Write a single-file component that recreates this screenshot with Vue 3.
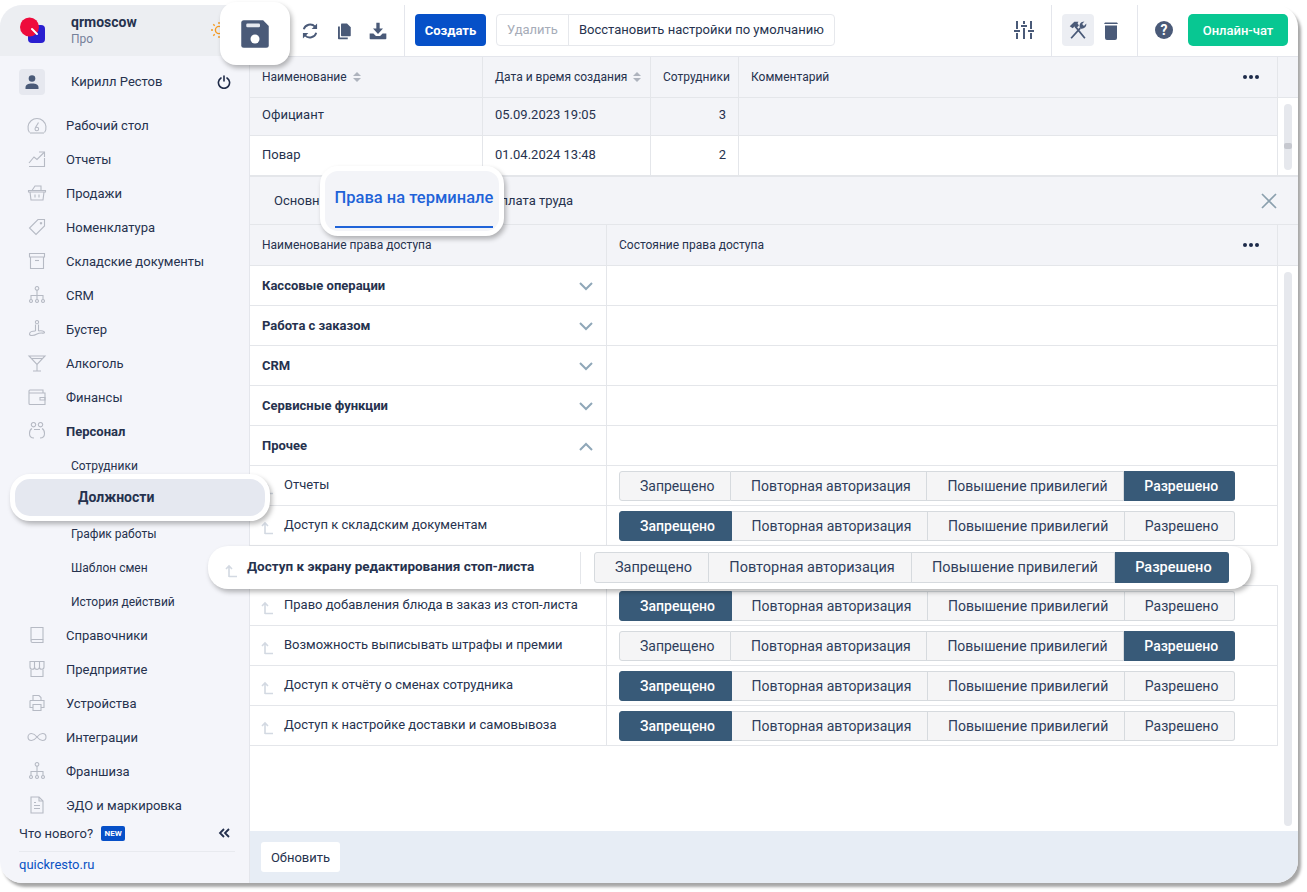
<template>
  <div class="page">
    <div class="app">
      <aside class="sidebar">
        <div class="side-head">
          <svg class="logo" width="28" height="28" viewBox="0 0 28 28">
            <rect x="9" y="8" width="17" height="18" rx="4" fill="#2a1fd0" />
            <circle cx="10.500" cy="10" r="9.500" fill="#ee0b3c" />
            <path d="M13 12l5 5" stroke="#fff" stroke-width="2" stroke-linecap="round" />
          </svg>
          <div class="org">
            <div class="org-name">qrmoscow</div>
            <div class="org-plan">Про</div>
          </div>
          <svg class="sun" width="18" height="18" viewBox="0 0 18 18" fill="none" stroke="#f59b23" stroke-width="1.400">
            <circle cx="9" cy="9" r="3.600" />
            <path d="M9 1v2M9 15v2M1 9h2M15 9h2M3.300 3.300l1.400 1.400M13.300 13.300l1.400 1.400M3.300 14.700l1.400-1.400M13.300 4.700l1.400-1.400" />
          </svg>
        </div>

        <div class="user">
          <div class="avatar">
            <svg width="16" height="16" viewBox="0 0 16 16" fill="#4a5a78">
              <circle cx="8" cy="4.500" r="3.300" />
              <path d="M1.500 15v-1.600C1.500 11 4 9.600 8 9.600s6.500 1.400 6.500 3.800V15z" />
            </svg>
          </div>
          <span class="user-name">Кирилл Рестов</span>
          <svg class="power" width="14" height="14" viewBox="0 0 14 14" fill="none" stroke="#1f2b48" stroke-width="1.600" stroke-linecap="round">
            <path d="M4 3a5.600 5.600 0 1 0 6 0M7 1v5" />
          </svg>
        </div>

        <nav class="nav">
          <template v-for="item in nav" :key="item.label">
            <div v-if="item.sub" class="nav-sub">
              <div v-if="item.current" class="nav-current">{{ item.label }}</div>
              <template v-else>{{ item.label }}</template>
            </div>
            <div v-else class="nav-item" :class="{ open: item.open }">
              <svg width="20" height="20" viewBox="0 0 20 20" fill="none" stroke="#b6bac4" stroke-width="1.100">
                <path v-for="d in icons[item.icon]" :key="d" :d="d" />
              </svg>
              <span>{{ item.label }}</span>
            </div>
          </template>
        </nav>

        <div class="side-foot">
          <div class="news">
            <span>Что нового?</span>
            <span class="badge">NEW</span>
            <svg class="collapse" width="12" height="12" viewBox="0 0 12 12" fill="none" stroke="#24304e" stroke-width="1.800">
              <path d="M6 2L2 6l4 4M11 2L7 6l4 4" />
            </svg>
          </div>
          <div class="site">quickresto.ru</div>
        </div>
      </aside>

      <main class="main">
        <header class="topbar">
          <div class="save-pop">
            <svg width="30" height="30" viewBox="0 0 24 24">
              <path fill="#4a5a78" d="M3 1h15.500L23 5.500V21a2 2 0 0 1-2 2H3a2 2 0 0 1-2-2V3a2 2 0 0 1 2-2z" />
              <rect x="5" y="3.600" width="11" height="3" rx="1" fill="#e6e9f0" />
              <circle cx="12" cy="16" r="3.600" fill="#fff" />
            </svg>
          </div>
          <div class="tool-group first">
            <svg class="tool" width="20" height="20" viewBox="0 0 24 24" fill="none" stroke="#4a5a78" stroke-width="2.200">
              <path d="M4.500 10A8 8 0 0 1 18 6.800M19.500 14A8 8 0 0 1 6 17.200" />
              <path fill="#4a5a78" stroke="none" d="M20.500 3v6.500H14zM3.500 21v-6.500H10z" />
            </svg>
            <svg class="tool" width="18" height="18" viewBox="0 0 24 24" fill="#4a5a78">
              <path d="M9 2h7l5 5v11a1 1 0 0 1-1 1H9a1 1 0 0 1-1-1V3a1 1 0 0 1 1-1z" />
              <path d="M4 6h2.500v14.500H17V23H5a1 1 0 0 1-1-1z" />
            </svg>
            <svg class="tool" width="20" height="20" viewBox="0 0 24 24" fill="#4a5a78">
              <path d="M10 2h4v7h4l-6 6.500L6 9h4z" />
              <path d="M2 15h4.500l3 3h5l3-3H22v6a1 1 0 0 1-1 1H3a1 1 0 0 1-1-1z" />
            </svg>
          </div>
          <div class="actions">
            <button class="btn-create">Создать</button>
            <div class="btn-group">
              <span class="muted">Удалить</span>
              <span>Восстановить настройки по умолчанию</span>
            </div>
          </div>
          <div class="spacer"></div>
          <svg class="sliders" width="20" height="20" viewBox="0 0 20 20" stroke="#4a5a78" stroke-width="2" fill="none">
            <path d="M3 1v8M3 13v6M0 11h6M10 1v3M10 8v11M7 6h6M17 1v8M17 13v6M14 11h6" />
          </svg>
          <div class="tool-group bordered">
            <div class="tool-active">
              <svg width="22" height="22" viewBox="0 0 24 24" fill="none" stroke="#4a5a78">
                <path stroke-width="1.900" d="M4.500 21L14.500 10M19.500 21L9 8" />
                <path fill="#4a5a78" stroke="none" d="M3 8l5-5h4.500l-1 1.500 1.500 2.500-3 3.200-1.800-2-2 1.800zM14 9c-1-3 1-6.200 5-6.200l-2.500 2.700 2 2L21 5c.6 4-3 6.200-6 5.500z" />
              </svg>
            </div>
            <svg class="trash" width="18" height="20" viewBox="0 0 18 20" fill="#4a5a78">
              <path d="M3 1.500h12l1 1.500H2zM3 4.500h12V17a2 2 0 0 1-2 2H5a2 2 0 0 1-2-2z" />
            </svg>
          </div>
          <div class="help">?</div>
          <button class="btn-chat">Онлайн-чат</button>
        </header>

        <section class="upper">
          <div class="upper-table">
            <div class="up-row head">
              <div class="cell"><span>Наименование</span>
                <svg class="sort" width="10" height="12" viewBox="0 0 10 12" fill="#aeb3bd"><path d="M5 1l4 4H1zM5 11L1 7h8z" /></svg>
              </div>
              <div class="cell"><span>Дата и время создания</span>
                <svg class="sort" width="10" height="12" viewBox="0 0 10 12" fill="#aeb3bd"><path d="M5 1l4 4H1zM5 11L1 7h8z" /></svg>
              </div>
              <div class="cell">Сотрудники</div>
              <div class="cell wide">Комментарий
                <span class="dots"><i></i><i></i><i></i></span>
              </div>
            </div>
            <div v-for="p in positions" :key="p.name" class="up-row" :class="{ selected: p.selected }">
              <div class="cell">{{ p.name }}</div>
              <div class="cell">{{ p.date }}</div>
              <div class="cell num">{{ p.count }}</div>
              <div class="cell"></div>
            </div>
          </div>
          <div class="side-scroll">
            <div class="scroll-head"></div>
            <div class="track short"><div class="thumb"></div></div>
          </div>
        </section>

        <section class="details">
          <div class="tabs">
            <span class="tab">Основные</span>
            <span class="tab tab-main">
              <span class="tab-pop"><span class="tab-pop-text">Права на терминале</span></span>
            </span>
            <span class="tab">Оплата труда</span>
            <svg class="close" width="16" height="16" viewBox="0 0 16 16" stroke="#8ba0ae" stroke-width="1.700" fill="none">
              <path d="M1 1l14 14M15 1L1 15" />
            </svg>
          </div>

          <div class="rights-wrap">
            <div class="rights">
              <div class="r-row r-head">
                <div class="r-name">Наименование права доступа</div>
                <div class="r-state">Состояние права доступа
                  <span class="dots"><i></i><i></i><i></i></span>
                </div>
              </div>

              <div v-for="g in groups" :key="g.name" class="r-row group">
                <div class="r-name">
                  {{ g.name }}
                  <svg class="chev" width="14" height="9" viewBox="0 0 14 9" fill="none" stroke="#8fa7b8" stroke-width="2">
                    <path :d="g.open ? 'M1 8l6-6 6 6' : 'M1 1l6 6 6-6'" />
                  </svg>
                </div>
                <div class="r-state"></div>
              </div>

              <div v-for="r in rights" :key="r.name" class="r-row">
                <div v-if="r.lifted" class="lifted">
                  <svg class="child-ico" width="12" height="14" viewBox="0 0 12 14" fill="none" stroke="#d3d9e2" stroke-width="1.600">
                    <path d="M4 13V2M1 5l3-3 3 3M4 12.500h8" />
                  </svg>
                  <b class="lifted-name">{{ r.name }}</b>
                  <div class="lifted-line"></div>
                  <div class="seg big">
                    <span v-for="(s, i) in states" :key="s" :class="{ on: r.active === i }">{{ s }}</span>
                  </div>
                </div>
                <template v-else>
                  <div class="r-name child">
                    <svg class="child-ico" width="12" height="14" viewBox="0 0 12 14" fill="none" stroke="#d3d9e2" stroke-width="1.600">
                      <path d="M4 13V2M1 5l3-3 3 3M4 12.500h8" />
                    </svg>
                    <span>{{ r.name }}</span>
                  </div>
                  <div class="r-state">
                    <div class="seg">
                      <span v-for="(s, i) in states" :key="s" :class="{ on: r.active === i }">{{ s }}</span>
                    </div>
                  </div>
                </template>
              </div>
            </div>
            <div class="side-scroll">
              <div class="scroll-head"></div>
              <div class="track long"></div>
            </div>
          </div>

          <div class="foot">
            <button class="btn-refresh">Обновить</button>
          </div>
        </section>
      </main>
    </div>
  </div>
</template>

<script setup>
const icons = {
  gauge: ['M2.500 17.500A9 9 0 1 1 17.500 17.500', 'M3 18h14', 'M8.500 12.500l3-5', 'M8 14a1.800 1.800 0 1 0 3.600 0a1.800 1.800 0 1 0-3.600 0'],
  chart: ['M2 14l5-6 3 2.500 7-7', 'M12 3h5.500v5', 'M2 17.500h15.500V9'],
  basket: ['M1.500 7.500h17v1.500h-17z', 'M3 9l1 8h12l1-8', 'M5 7.500L8 3h6v4.500', 'M8 11.500v3M12 11.500v3'],
  tag: ['M11 2.500h6.500V9L9 17.500 2.500 11z', 'M14 5.500a.7.7 0 1 0 .01 0'],
  box: ['M2.500 2.500h15v3.500h-15z', 'M3.500 6v11.500h13V6', 'M8 9.500h4'],
  org: ['M10 1.500a1.800 1.800 0 1 0 .01 0', 'M10 5v9M4 14v-3.500h12V14', 'M4 14.500a1.500 1.500 0 1 0 .01 0M10 14.500a1.500 1.500 0 1 0 .01 0M16 14.500a1.500 1.500 0 1 0 .01 0'],
  buster: ['M10 1.500a1.600 1.600 0 1 0 .01 0', 'M8.500 5.500v6.500M11.500 5.500v6.500', 'M8.500 12C5 12 2.500 13 2.500 15s4 2 7.500 0 7.500 0 7.500-1.500-3-2-6-1.500'],
  glass: ['M2 3h16L10 11.500z', 'M4.500 5.500h11', 'M10 11.500V18M6 18h8'],
  wallet: ['M16 6V3H3a1 1 0 0 0-1 1v12.500a1 1 0 0 0 1 1h15V6H2.500', 'M13 10.500h5v2.500h-5z'],
  people: ['M6.500 1.500a2.200 2.200 0 1 0 .01 0M13.500 1.500a2.200 2.200 0 1 0 .01 0', 'M5 7.500C3 8.500 2.500 10 2.500 12.500c0 3 2 4.500 4.500 4.500M15 7.500c2 1 2.500 2.500 2.500 5 0 3-2 4.500-4.500 4.500M7 8.500h6'],
  book: ['M4 2.500h12v12H5.500A1.500 1.500 0 0 0 4 16z', 'M4 16a1.500 1.500 0 0 0 1.500 1.500H16v-3'],
  shop: ['M3 2.500h14v5.500a2.300 2.300 0 0 1-4.600 0 2.400 2.400 0 0 1-4.800 0A2.300 2.300 0 0 1 3 8z', 'M7.500 2.500V8M12.500 2.500V8', 'M4 11v6.500h12V11'],
  printer: ['M6 7V2.500h6l2 2V7', 'M3 7.500h14v7h-3M6 14.500H3v-7', 'M6 11.500h8v6H6z'],
  infinity: ['M10 10C8 7.500 6.500 6.500 4.500 6.500a3.500 3.500 0 0 0 0 7c2 0 3.500-1 5.500-3.500s3.500-3.500 5.500-3.500a3.500 3.500 0 0 1 0 7c-2 0-3.500-1-5.500-3.500z'],
  doc: ['M4 2h8l4 4v12H4z', 'M12 2v4h4', 'M7 7.500h2M7 10.500h6M7 13.500h6']
}

const nav = [
  { label: 'Рабочий стол', icon: 'gauge' },
  { label: 'Отчеты', icon: 'chart' },
  { label: 'Продажи', icon: 'basket' },
  { label: 'Номенклатура', icon: 'tag' },
  { label: 'Складские документы', icon: 'box' },
  { label: 'CRM', icon: 'org' },
  { label: 'Бустер', icon: 'buster' },
  { label: 'Алкоголь', icon: 'glass' },
  { label: 'Финансы', icon: 'wallet' },
  { label: 'Персонал', icon: 'people', open: true },
  { label: 'Сотрудники', sub: true },
  { label: 'Должности', sub: true, current: true },
  { label: 'График работы', sub: true },
  { label: 'Шаблон смен', sub: true },
  { label: 'История действий', sub: true },
  { label: 'Справочники', icon: 'book' },
  { label: 'Предприятие', icon: 'shop' },
  { label: 'Устройства', icon: 'printer' },
  { label: 'Интеграции', icon: 'infinity' },
  { label: 'Франшиза', icon: 'org' },
  { label: 'ЭДО и маркировка', icon: 'doc' }
]

const positions = [
  { name: 'Официант', date: '05.09.2023 19:05', count: 3, selected: true },
  { name: 'Повар', date: '01.04.2024 13:48', count: 2 }
]

const groups = [
  { name: 'Кассовые операции' },
  { name: 'Работа с заказом' },
  { name: 'CRM' },
  { name: 'Сервисные функции' },
  { name: 'Прочее', open: true }
]

const states = ['Запрещено', 'Повторная авторизация', 'Повышение привилегий', 'Разрешено']

const rights = [
  { name: 'Отчеты', active: 3 },
  { name: 'Доступ к складским документам', active: 0 },
  { name: 'Доступ к экрану редактирования стоп-листа', active: 3, lifted: true },
  { name: 'Право добавления блюда в заказ из стоп-листа', active: 0 },
  { name: 'Возможность выписывать штрафы и премии', active: 3 },
  { name: 'Доступ к отчёту о сменах сотрудника', active: 0 },
  { name: 'Доступ к настройке доставки и самовывоза', active: 0 }
]
</script>

<style>
html,
body {
  margin: 0;
  background: #fff;
}
</style>

<style scoped>
.page {
  height: 892px;
  box-sizing: border-box;
  padding-top: 5px;
  overflow: hidden;
}

.app {
  display: flex;
  width: 1298px;
  height: 878px;
  border-radius: 22px;
  box-shadow: 3px 4px 3px rgba(0, 0, 0, 0.35);
  font-family: Roboto, "Noto Sans", sans-serif;
  font-size: 13px;
  color: #26324e;
  background: #fff;
}

button {
  font-family: inherit;
  cursor: pointer;
  border: 0;
}

.sidebar {
  width: 249px;
  flex-shrink: 0;
  display: flex;
  flex-direction: column;
  background: #f4f5fa;
  border-right: 1px solid #e4e6ec;
  border-radius: 22px 0 0 22px;
}

.side-head {
  height: 51px;
  display: flex;
  align-items: center;
  padding-left: 19px;
  background: #eceef2;
  border-radius: 22px 0 0 0;
  position: relative;
}

.logo {
  position: absolute;
  left: 19px;
  top: 12px;
}

.org {
  margin-left: 52px;
}

.org-name {
  font-size: 14px;
  font-weight: 700;
  line-height: 16px;
  padding-bottom: 1px;
  margin-top: -1px;
}

.org-plan {
  font-size: 12px;
  line-height: 16px;
  color: #76819a;
}

.sun {
  position: absolute;
  left: 210px;
  top: 16px;
}

.user {
  height: 52px;
  display: flex;
  align-items: center;
  padding-left: 19px;
  position: relative;
}

.avatar {
  width: 26px;
  height: 26px;
  border-radius: 4px;
  background: #e6e8ef;
  display: flex;
  align-items: center;
  justify-content: center;
}

.user-name {
  margin-left: 26px;
  margin-bottom: 2px;
}

.power {
  position: absolute;
  left: 217px;
  top: 19px;
}

.nav-item,
.nav-sub {
  height: 34px;
  display: flex;
  align-items: center;
  box-sizing: border-box;
}

.nav-item {
  padding-left: 27px;
  gap: 19px;
}

.nav-item.open {
  font-weight: 700;
}

.nav-sub {
  padding: 2px 0 0 71px;
  font-size: 12px;
  position: relative;
}

.nav-current {
  position: absolute;
  z-index: 5;
  left: 10px;
  top: -8px;
  width: 260px;
  height: 47px;
  box-sizing: border-box;
  display: flex;
  align-items: center;
  padding: 0 0 2px 63px;
  background: #e5e8f0;
  border: 5px solid #fff;
  border-radius: 20px;
  box-shadow: 2px 3px 5px rgba(0, 0, 0, 0.28);
  font-size: 14px;
  font-weight: 700;
}

.side-foot {
  margin: 0 14px 0 19px;
}

.news {
  height: 22px;
  display: flex;
  align-items: center;
  gap: 8px;
  position: relative;
}

.badge {
  width: 24px;
  height: 15px;
  background: #0650c8;
  border-radius: 2px;
  color: #fff;
  font-size: 8px;
  font-weight: 700;
  text-align: center;
  line-height: 15px;
}

.collapse {
  position: absolute;
  left: 199px;
  top: 5px;
}

.site {
  margin-top: 7px;
  padding-top: 5px;
  border-top: 1px solid #e8eaef;
  color: #0a52c4;
  line-height: 16px;
}

.main {
  flex: 1;
  min-width: 0;
  display: flex;
  flex-direction: column;
}

.topbar {
  height: 52px;
  flex-shrink: 0;
  box-sizing: border-box;
  display: flex;
  align-items: stretch;
  padding-bottom: 1px;
  border-bottom: 1px solid #e4e6ec;
  border-radius: 0 22px 0 0;
  position: relative;
}

.save-pop {
  position: absolute;
  z-index: 5;
  left: -30px;
  top: -3px;
  width: 70px;
  height: 63px;
  background: #fff;
  border-radius: 16px;
  box-shadow: 2px 3px 5px rgba(0, 0, 0, 0.28);
  display: flex;
  align-items: center;
  justify-content: center;
}

.tool-group {
  display: flex;
  align-items: center;
}

.tool-group.first {
  width: 155px;
  box-sizing: border-box;
  border-right: 1px solid #e4e6ec;
  padding-left: 50px;
  gap: 15px;
  margin-bottom: -1px;
}

.actions {
  display: flex;
  align-items: center;
  gap: 10px;
  padding-left: 10px;
}

.btn-create {
  width: 71px;
  height: 32px;
  background: #0650c8;
  color: #fff;
  border-radius: 4px;
  font-size: 13px;
  font-weight: 700;
}

.btn-group {
  display: flex;
  height: 32px;
  box-sizing: border-box;
  border: 1px solid #e6e8ec;
  border-radius: 4px;
  line-height: 30px;
}

.btn-group span {
  padding: 0 10px;
}

.btn-group .muted {
  color: #a6acb8;
  border-right: 1px solid #e6e8ec;
}

.spacer {
  flex: 1;
}

.sliders {
  align-self: center;
  margin-right: 17px;
}

.tool-group.bordered {
  width: 87px;
  box-sizing: border-box;
  border-left: 1px solid #e4e6ec;
  border-right: 1px solid #e4e6ec;
  padding-left: 10px;
  margin-bottom: -1px;
}

.tool-active {
  width: 32px;
  height: 32px;
  margin-bottom: 1px;
  background: #eceef3;
  border-radius: 4px;
  display: flex;
  align-items: center;
  justify-content: center;
}

.trash {
  margin-left: 8px;
}

.help {
  align-self: center;
  width: 18px;
  height: 18px;
  margin-left: 17px;
  border-radius: 50%;
  background: #4a5a78;
  color: #fff;
  font-size: 14px;
  font-weight: 700;
  line-height: 18px;
  text-align: center;
}

.btn-chat {
  align-self: center;
  width: 100px;
  height: 32px;
  margin-left: 15px;
  margin-right: 10px;
  background: #08c792;
  color: #fff;
  border-radius: 5px;
  font-size: 13px;
  font-weight: 500;
}

.upper {
  display: flex;
  height: 120px;
  flex-shrink: 0;
  box-sizing: border-box;
  border-bottom: 2px solid #e4e6ea;
}

.upper-table {
  width: 1028px;
}

.up-row {
  display: grid;
  grid-template-columns: 233px 168px 88px 539px;
  height: 39px;
  box-sizing: border-box;
  background: #fff;
}

.up-row.head {
  height: 41px;
  background: #f3f4f8;
  border-bottom: 1px solid #e4e6ea;
  font-size: 12px;
}

.up-row.selected {
  height: 38px;
  background: #f3f4f8;
  border-bottom: 1px solid #e4e6ea;
}

.up-row.selected .cell {
  padding-bottom: 4px;
}

.cell {
  display: flex;
  align-items: center;
  box-sizing: border-box;
  padding: 0 12px;
  border-right: 1px solid #e4e6ea;
  white-space: nowrap;
  position: relative;
}

.up-row:not(.head):not(.selected) .cell {
  padding-bottom: 2px;
}

.cell.num {
  justify-content: flex-end;
}

.sort {
  margin-left: 5px;
  flex-shrink: 0;
}

.dots {
  position: absolute;
  right: 18px;
  top: 50%;
  margin-top: -2px;
  display: flex;
  gap: 2px;
}

.dots i {
  width: 4px;
  height: 4px;
  border-radius: 50%;
  background: #1d2a4a;
}

.side-scroll {
  width: 20px;
  display: flex;
  flex-direction: column;
}

.scroll-head {
  height: 41px;
  flex-shrink: 0;
  background: #f3f4f8;
  border-bottom: 1px solid #e4e6ea;
  box-sizing: border-box;
}

.track {
  width: 8px;
  margin-left: 6px;
  border-radius: 4px;
  background: #e6e8ed;
}

.track.short {
  height: 66px;
  margin-top: 6px;
  padding-top: 39px;
  box-sizing: border-box;
}

.thumb {
  height: 6px;
  background: #c6c8cf;
  border-radius: 2px;
}

.track.long {
  height: 554px;
  margin-top: 6px;
}

.details {
  flex: 1;
  min-height: 0;
  display: flex;
  flex-direction: column;
}

.tabs {
  height: 48px;
  flex-shrink: 0;
  box-sizing: border-box;
  display: flex;
  align-items: center;
  padding: 0 21px 0 24px;
  background: #f3f4f8;
  border-bottom: 1px solid #e4e6ea;
}

.tab {
  white-space: nowrap;
}

.tab-main {
  width: 155px;
  position: relative;
  height: 100%;
}

.tab-pop {
  position: absolute;
  z-index: 5;
  left: -17px;
  top: -11px;
  width: 184px;
  height: 70px;
  box-sizing: border-box;
  padding: 0 6px 0 10px;
  background: #f3f4f8;
  border: 5px solid #fff;
  border-radius: 18px;
  box-shadow: 2px 3px 5px rgba(0, 0, 0, 0.28);
}

.tab-pop-text {
  display: block;
  height: 57px;
  line-height: 54px;
  box-sizing: border-box;
  border-bottom: 2px solid #1f63d8;
  color: #1f63d8;
  font-size: 16.500px;
  font-weight: 500;
  white-space: nowrap;
}

.close {
  margin-left: auto;
}

.rights-wrap {
  flex: 1;
  min-height: 0;
  display: flex;
}

.rights {
  width: 1028px;
  font-size: 13px;
}

.r-row {
  display: grid;
  grid-template-columns: 357px 671px;
  height: 40px;
  box-sizing: border-box;
  border-bottom: 1px solid #e4e6ea;
  position: relative;
}

.r-head {
  height: 41px;
  background: #f3f4f8;
  font-size: 12px;
}

.r-name {
  display: flex;
  align-items: center;
  padding: 0 12px;
  box-sizing: border-box;
  border-right: 1px solid #e4e6ea;
  position: relative;
}

.group .r-name {
  font-weight: 700;
}

.chev {
  position: absolute;
  left: 329px;
  top: 16px;
}

.child {
  padding-bottom: 3px;
}

.child-ico {
  margin-right: 11px;
  margin-top: 7px;
  margin-left: -1px;
  flex-shrink: 0;
}

.r-state {
  display: flex;
  align-items: center;
  padding-left: 12px;
  border-right: 1px solid #e4e6ea;
  position: relative;
}

.seg {
  display: flex;
  height: 30px;
  box-sizing: border-box;
  font-size: 14px;
  color: #2f3e5c;
}

.seg span {
  box-sizing: border-box;
  padding: 0 15.600px 0 20px;
  line-height: 28px;
  background: #f5f5f6;
  border: 1px solid #d6dade;
  border-left-width: 0;
  white-space: nowrap;
}

.seg span:first-child {
  border-left-width: 1px;
  border-radius: 3px 0 0 3px;
}

.seg span:last-child {
  border-radius: 0 3px 3px 0;
}

.seg span.on {
  background: #385a78;
  border-color: #385a78;
  color: #fff;
  font-weight: 500;
}

.lifted {
  position: absolute;
  z-index: 5;
  left: -42px;
  top: 0;
  width: 1043px;
  height: 43px;
  box-sizing: border-box;
  display: flex;
  align-items: center;
  padding-left: 18px;
  background: #fff;
  border-radius: 20px;
  box-shadow: 2px 3px 5px rgba(0, 0, 0, 0.28);
}

.lifted .child-ico {
  margin-right: 10px;
}

.lifted-name {
  font-size: 13.500px;
  font-weight: 700;
  width: 333px;
  flex-shrink: 0;
  padding-bottom: 3px;
  white-space: nowrap;
}

.lifted-line {
  width: 1px;
  height: 32px;
  background: #e4e6ea;
  margin-right: 13px;
}

.seg.big {
  height: 31px;
  font-size: 14.500px;
}

.seg.big span {
  padding: 0 16.200px 0 20px;
  line-height: 29px;
}

.foot {
  height: 52px;
  flex-shrink: 0;
  background: #e7edf5;
  display: flex;
  align-items: center;
  padding-left: 11px;
  border-radius: 0 0 22px 0;
}

.btn-refresh {
  width: 79px;
  height: 30px;
  background: #fff;
  border-radius: 3px;
  font-size: 13px;
  color: #26324e;
}
</style>
